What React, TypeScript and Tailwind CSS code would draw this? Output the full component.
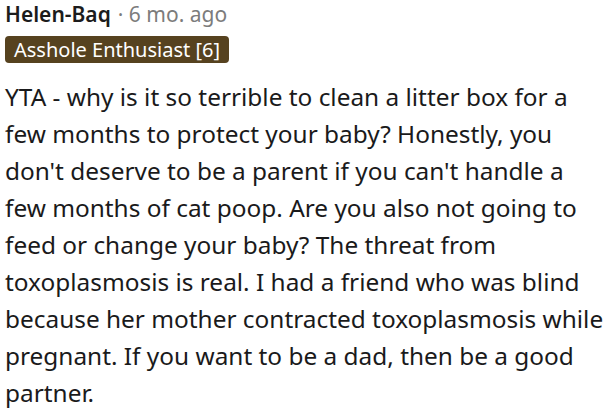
import React from "react";

const lines = [
  "YTA - why is it so terrible to clean a litter box for a",
  "few months to protect your baby? Honestly, you",
  "don't deserve to be a parent if you can't handle a",
  "few months of cat poop. Are you also not going to",
  "feed or change your baby? The threat from",
  "toxoplasmosis is real. I had a friend who was blind",
  "because her mother contracted toxoplasmosis while",
  "pregnant. If you want to be a dad, then be a good",
  "partner.",
];

export default function App() {
  return (
    <div className="w-[612px] h-[409px] overflow-hidden bg-white px-[5px]">
      <div className="flex items-center gap-[7px] text-[21px] leading-[28px] font-['Noto_Sans',sans-serif]">
        <span className="font-semibold text-[#1c1c1c]">Helen-Baq</span>
        <span className="text-[#7c7c7c]">· 6 mo. ago</span>
      </div>
      <div className="mt-[8px] inline-flex h-[27px] items-center rounded-[4px] bg-[#56421f] px-[9px] text-[20px] text-white font-['Noto_Sans',sans-serif]">
        Asshole Enthusiast [6]
      </div>
      <div className="mt-[15px] text-[24.4px] leading-[37px] text-[#1a1a1b] font-['Noto_Sans',sans-serif]">
        {lines.map((l) => (
          <div key={l} className="whitespace-nowrap">
            {l}
          </div>
        ))}
      </div>
    </div>
  );
}
